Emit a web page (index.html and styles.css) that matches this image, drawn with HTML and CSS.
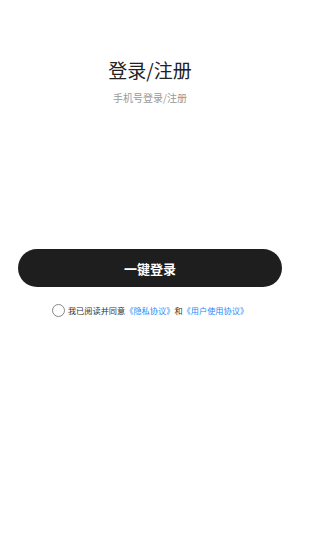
FILE: index.html
```html
<!DOCTYPE html>
<html lang="zh-CN">
<head>
<meta charset="utf-8">
<link rel="stylesheet" href="styles.css">
</head>
<body>
<div class="page">
  <h1 class="title">登录/注册</h1>
  <p class="subtitle">手机号登录/注册</p>
  <button class="login-btn">一键登录</button>
  <div class="agree">
    <span class="check"></span>
    <span class="agree-text">我已阅读并同意<a class="link">《隐私协议》</a>和<a class="link">《用户使用协议》</a></span>
  </div>
</div>
</body>
</html>
```
FILE: styles.css
```css
html, body {
  margin: 0;
  padding: 0;
  background: #ffffff;
}
body {
  font-family: "Noto Sans CJK SC", "Noto Sans", sans-serif;
  width: 300px;
  height: 533px;
}
.page {
  display: flex;
  flex-direction: column;
  align-items: center;
  padding: 58px 18px 0;
}
.title {
  margin: 0;
  font-size: 19px;
  line-height: 24px;
  font-weight: 400;
  color: #222222;
}
.subtitle {
  margin: 9px 0 0;
  font-size: 10px;
  line-height: 14px;
  color: #999999;
}
.login-btn {
  margin-top: 144px;
  width: 264px;
  height: 38px;
  border: none;
  border-radius: 19px;
  background: #1e1e1e;
  color: #ffffff;
  font-family: "Noto Sans CJK SC", sans-serif;
  font-size: 13px;
  font-weight: 700;
  padding: 0;
}
.agree {
  margin-top: 16px;
  display: flex;
  align-items: center;
  gap: 3px;
  height: 14px;
}
.check {
  width: 11px;
  height: 11px;
  border: 1px solid #888888;
  border-radius: 50%;
}
.agree-text {
  font-size: 8.2px;
  line-height: 14px;
  color: #333333;
  white-space: nowrap;
}
.link {
  color: #1a8cff;
}
```
